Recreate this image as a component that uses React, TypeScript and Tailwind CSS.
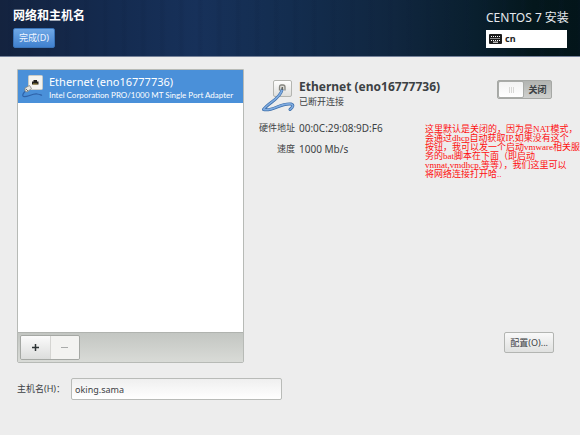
import { useState } from "react";

const uiFont = "font-['Noto_Sans','Noto_Sans_CJK_SC',sans-serif]";

function KeyboardIcon() {
  return (
    <svg width="13" height="10" viewBox="0 0 13 10" aria-hidden="true">
      <rect width="13" height="10" rx="1" fill="#1c1c1c" />
      <g stroke="#fff" strokeWidth="1">
        <path d="M2 2.5H11" strokeDasharray="1 1" />
        <path d="M1.5 4.5H11.5" strokeDasharray="1 1" />
        <path d="M2 6.5H11" strokeDasharray="1 1" />
        <path d="M4 8.2H9" />
      </g>
    </svg>
  );
}

function UnpluggedIcon() {
  return (
    <svg width="22" height="24" viewBox="0 0 22 24" aria-hidden="true">
      <rect x="6.5" y="0.5" width="14" height="14" rx="1" fill="#f3f3ef" stroke="#c9cbc6" />
      <path d="M10 9.500V6.500H11.500V5H15V6.500H16.500V9.500Z" fill="#1f1f1a" />
      <path d="M11 9H15.500" stroke="#a99440" />
      <path d="M3.500 16C1 18 0 21 1.500 21.500C5 22.500 10 18.500 15 19C19 19.500 19 20.500 20 20" fill="none" stroke="#2f62a8" strokeWidth="1.200" />
      <path d="M3 13L7.500 10.500L9.500 13.500L5 17L3 16Z" fill="#e6e6e2" stroke="#85867f" strokeWidth="0.800" />
      <path d="M4 14L6 16" stroke="#55564f" strokeWidth="0.800" />
    </svg>
  );
}

function CableIcon() {
  return (
    <svg width="34" height="33" viewBox="0 0 34 33" aria-hidden="true">
      <defs>
        <linearGradient id="plate" x2="0" y2="1">
          <stop stopColor="#ffffff" />
          <stop offset="1" stopColor="#dededb" />
        </linearGradient>
      </defs>
      <rect x="12.500" y="0.500" width="18" height="16" rx="1.500" fill="url(#plate)" stroke="#b4b5b1" />
      <path d="M18.500 10.500V7Q18.500 5 20 5H22Q24 5 24 7V10.500" fill="#dcdcd8" stroke="#85857f" strokeWidth="1.300" />
      <g fill="none" strokeLinecap="round" strokeLinejoin="round">
        <path d="M21 10C19 19 8 22 2.500 29.500C11 32 20 22.500 30 24C33 25 32 27 29 29.500" stroke="#3c6ea9" strokeWidth="3" />
        <path d="M21 10C19 19 8 22 2.500 29.500C11 32 20 22.500 30 24C33 25 32 27 29 29.500" stroke="#7fabe0" strokeWidth="1.600" />
      </g>
      <path d="M21.300 7V10" stroke="#65655f" strokeWidth="1.500" />
    </svg>
  );
}

function Header() {
  return (
    <header className="flex h-[57px] items-start justify-between border-b border-[#75829a] bg-[repeating-linear-gradient(90deg,transparent_0_7px,#0b1a3818_9px_11px,transparent_14px_19px),linear-gradient(90deg,#14233f_0%,#142b50_20%,#17315a_34%,#132d4f_50%,#10263f_68%,#091f2e_82%,#04171c_92%,#03151a_100%)] px-[13px] text-white">
      <div className="flex flex-col items-start gap-1 pt-2">
        <h1 className="text-[12px] leading-4 font-bold">网络和主机名</h1>
        <button
          type="button"
          className="h-5 rounded-[2px] border border-[#3973b8] bg-linear-to-b from-[#6fa8e6] to-[#4081cf] px-[5px] text-[9px] leading-[18px] text-[#eef5ff]"
        >
          完成(D)
        </button>
      </div>
      <div className="flex w-[81px] flex-col gap-1 pt-[10px]">
        <p className="text-[12px] leading-4 whitespace-nowrap text-[#e6eaee]">CENTOS 7 安装</p>
        <button type="button" className="flex h-[18px] items-center gap-[3px] bg-white px-[3px] text-[9px] leading-4 font-bold text-[#222]">
          <KeyboardIcon />
          cn
        </button>
      </div>
    </header>
  );
}

function DeviceList() {
  return (
    <section className="flex w-[227px] shrink-0 flex-col rounded-b-[2px] border border-[#b7bab6]">
      <ul className="h-[262px] bg-white">
        <li className="flex h-[33px] items-center gap-[5px] bg-[#4a90d9] pl-1 text-white">
          <UnpluggedIcon />
          <div className="pt-[2px] whitespace-nowrap">
            <p className="text-[11px] leading-[14px]">Ethernet (eno16777736)</p>
            <p className="font-['Lato',sans-serif] text-[8px] leading-3">Intel Corporation PRO/1000 MT Single Port Adapter</p>
          </div>
        </li>
      </ul>
      <div className="h-[30px] border-t border-[#b0b3af] bg-linear-to-b from-[#c3c6c2] to-[#d9dbd7] px-[2px] pt-[2px]">
        <div className="flex h-[25px] w-[60px] overflow-hidden rounded-[2px] border border-[#a5a8a4]">
          <button type="button" aria-label="+" className="flex flex-1 items-center justify-center border-r border-[#d5d5d2] bg-linear-to-b from-[#fbfbfb] to-[#dcdddc]">
            <svg width="9" height="9" viewBox="0 0 9 9" aria-hidden="true">
              <path d="M4.500 1V8M1 4.500H8" stroke="#2e3436" strokeWidth="1.500" />
            </svg>
          </button>
          <button type="button" aria-label="−" disabled className="flex flex-1 items-center justify-center bg-[#f3f3f1]">
            <svg width="9" height="9" viewBox="0 0 9 9" aria-hidden="true">
              <path d="M1 4.500H8" stroke="#a9abaa" />
            </svg>
          </button>
        </div>
      </div>
    </section>
  );
}

function PowerSwitch() {
  const [on, setOn] = useState(false);
  return (
    <button
      type="button"
      role="switch"
      aria-checked={on}
      onClick={() => setOn(!on)}
      className="flex h-[19px] w-[55px] items-stretch rounded-[2px] border border-[#a6a8a5] bg-linear-to-b from-[#b2b4b1] to-[#cfd0ce] text-[9px] leading-[17px] font-bold text-[#3c4144]"
    >
      <span className="flex w-[26px] items-center justify-center gap-px rounded-[2px] border border-[#a9aba8] bg-linear-to-b from-[#f2f2f2] to-white">
        <i className="h-[6px] w-px bg-[#d8d8d6]" />
        <i className="h-[6px] w-px bg-[#d8d8d6]" />
        <i className="h-[6px] w-px bg-[#d8d8d6]" />
      </span>
      <span className="flex-1 text-center">{on ? "打开" : "关闭"}</span>
    </button>
  );
}

function DeviceDetails() {
  return (
    <section className="flex flex-1 flex-col justify-between pl-[12px]">
      <div>
        <div className="flex items-start pt-[9px]">
          <div className="flex w-[39px] shrink-0 justify-end pt-[2px]">
            <CableIcon />
          </div>
          <div className="flex-1 pt-px pl-1 whitespace-nowrap">
            <h2 className="text-[12px] leading-4 font-bold">Ethernet (eno16777736)</h2>
            <p className="text-[9px] leading-[14px]">已断开连接</p>
          </div>
          <div className="mr-7 pt-[2px]">
            <PowerSwitch />
          </div>
        </div>
        <div className="flex justify-between pt-[8px]">
          <dl className="grid grid-cols-[39px_auto] content-start gap-x-1 gap-y-[7px] leading-[14px] whitespace-nowrap">
            <dt className="text-right text-[9px]">硬件地址</dt>
            <dd className="text-[10px]">00:0C:29:08:9D:F6</dd>
            <dt className="text-right text-[9px]">速度</dt>
            <dd className="text-[10px]">1000 Mb/s</dd>
          </dl>
          <p className="pt-1 font-['Liberation_Serif','Noto_Sans_CJK_SC',serif] text-[9px] leading-[9px] whitespace-nowrap text-[#ff1010]">
            这里默认是关闭的，因为是NAT模式，
            <br />
            会通过dhcp自动获取IP,如果没有这个
            <br />
            按钮，我可以发一个启动vmware相关服
            <br />
            务的bat脚本在下面（即启动
            <br />
            vmnat,vmdhcp,等等），我们这里可以
            <br />
            将网络连接打开哈..
          </p>
        </div>
      </div>
      <button
        type="button"
        className="mr-[26px] mb-[10px] h-[21px] self-end rounded-[2px] border border-[#b3b5b2] bg-linear-to-b from-[#f9f9f9] to-[#e0e1e0] px-[5px] text-[9px] leading-[18px]"
      >
        配置(O)...
      </button>
    </section>
  );
}

export default function App() {
  return (
    <main className={`min-h-screen bg-[#ededed] text-[#3c4144] ${uiFont}`}>
      <Header />
      <div className="flex pt-3 pl-[17px]">
        <DeviceList />
        <DeviceDetails />
      </div>
      <div className="flex items-center gap-[6px] pt-[15px] pl-[17px] text-[9px]">
        <label htmlFor="hostname">主机名(H)：</label>
        <input
          id="hostname"
          defaultValue="oking.sama"
          className="h-[22px] w-[211px] rounded-[2px] border border-[#b9bbb8] bg-linear-to-b from-[#efefef] to-white px-[3px] outline-none"
        />
      </div>
    </main>
  );
}
